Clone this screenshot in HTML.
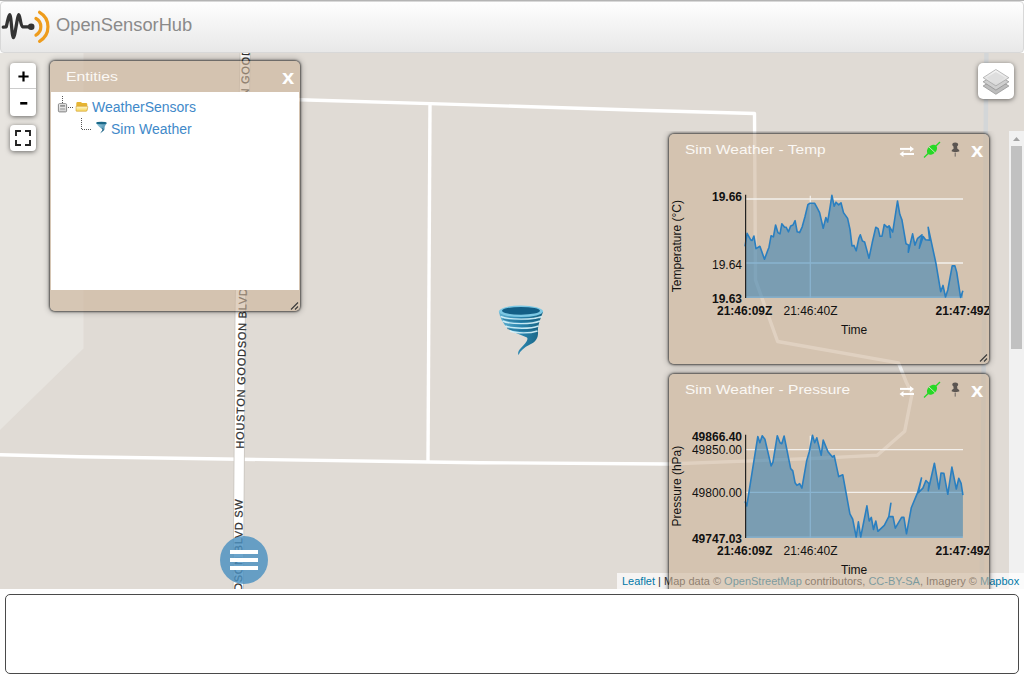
<!DOCTYPE html>
<html><head><meta charset="utf-8">
<style>
*{box-sizing:border-box}
html,body{margin:0;padding:0;width:1024px;height:675px;overflow:hidden;background:#fff;font-family:"Liberation Sans",sans-serif}
#topline{position:absolute;left:0;top:0;width:1024px;height:1px;background:#b4b4b4}
#header{position:absolute;left:0;top:1px;width:1024px;height:52px;border:1px solid #d8d8d8;border-radius:4px;background:linear-gradient(#fefefe,#e8e8e8)}
#brand{position:absolute;left:55px;top:12px;font-size:18.3px;color:#8a8a8a}
#map{position:absolute;left:0;top:53px;width:1024px;height:536px;overflow:hidden}
#bottom{position:absolute;left:5px;top:594px;width:1014px;height:80px;border:1.5px solid #4a4a4a;border-radius:5px;background:#fff}
.lctl{position:absolute;background:#fff;border-radius:4px;box-shadow:0 1px 5px rgba(0,0,0,.55)}
.win{position:absolute;background:rgba(204,178,152,.6);border-radius:5px;box-shadow:0 0 2px 1px rgba(0,0,0,.55),0 0 6px 1px rgba(0,0,0,.3)}
.wtitle{position:absolute;color:#fbf8f4;font-size:13.6px;white-space:nowrap;transform:scaleX(1.14);transform-origin:0 0}
.yl{position:absolute;right:282px;font-size:12px;color:#111;white-space:nowrap;line-height:14px}
.xl{position:absolute;font-size:12px;color:#111;white-space:nowrap;line-height:14px}
.yt{position:absolute;font-size:12px;color:#111;white-space:nowrap;line-height:14px;transform-origin:0 0;transform:translate(-50%,0) rotate(-90deg)}
#attr{position:absolute;left:617px;top:520px;width:407px;height:16px;background:rgba(255,255,255,.7);font-size:11px;line-height:16px;padding-left:5px;color:#333;white-space:nowrap}
#attr a{color:#0078a8;text-decoration:none}
#scroll{position:absolute;left:660px;top:78px;width:364px;height:560px;overflow:hidden}
</style></head><body>
<div id="topline"></div>
<div id="header">
 <svg style="position:absolute;left:-1px;top:-2px" width="60" height="52" viewBox="0 0 60 52">
  <path d="M3.3 27.2 L6.2 26.8 C7.6 22 8.4 14.6 9.7 14.6 C11.2 14.6 11.9 37.6 13.4 37.6 C15 37.6 17.4 14.6 18.8 14.6 C20 14.6 20.6 26.6 22.6 26.8 L31 26.8" fill="none" stroke="#333" stroke-width="3.3" stroke-linejoin="round" stroke-linecap="round"/>
  <circle cx="31.2" cy="26.8" r="3.3" fill="#333"/>
  <path d="M35.95 18.5 A9.5 9.5 0 0 1 35.95 35.1" fill="none" stroke="#ee9c1c" stroke-width="3.2" stroke-linecap="round"/>
  <path d="M39.55 12.3 A16.7 16.7 0 0 1 39.55 41.3" fill="none" stroke="#ee9c1c" stroke-width="3.2" stroke-linecap="round"/>
 </svg>
 <div id="brand">OpenSensorHub</div>
</div>
<div id="map">
<svg style="position:absolute;left:0;top:0" width="1024" height="536" viewBox="0 53 1024 536">
<rect x="0" y="53" width="1024" height="536" fill="#e0dbd5"/>
<polygon points="0,53 83.5,53 83.5,348.5 0,430" fill="#e7e4df"/>
<polyline points="250,98.2 300,99.7 455,104.4 640,110.2 754.5,113.5 755.5,280 777.6,341.5 898.5,362.8 906.2,382 912,394 904.7,431.2 877.3,455.2 850,456.6 825,458 668,464 480,462.7 428,462 80,456.8 0,454.7" fill="none" stroke="#fff" stroke-width="3.4" stroke-linejoin="round"/>
<polyline points="430,103.8 428,462" fill="none" stroke="#fff" stroke-width="3.4" stroke-linejoin="round"/>
<line x1="986.4" y1="53" x2="981.8" y2="589" stroke="#d3d6d8" stroke-width="4.5"/>
<polyline points="245.2,53 240.2,311 238.3,589" fill="none" stroke="#cbc7c1" stroke-width="11.2"/>
<polyline points="245.2,53 240.2,311 238.3,589" fill="none" stroke="#fff" stroke-width="9.4"/>
<text x="0" y="0" style="font-family:'Liberation Sans',sans-serif;font-size:11px;letter-spacing:0.75px;fill:#303030;stroke:#303030;stroke-width:0.25px" transform="translate(243.7,448.8) rotate(-88.9)">HOUSTON GOODSON BLVD SW</text>
<text x="0" y="0" style="font-family:'Liberation Sans',sans-serif;font-size:11px;letter-spacing:0.75px;fill:#303030;stroke:#303030;stroke-width:0.25px" transform="translate(248.8,96.5) rotate(-88.9)">N GOODSON</text>
<text x="0" y="0" style="font-family:'Liberation Sans',sans-serif;font-size:11px;letter-spacing:0.75px;fill:#303030;stroke:#303030;stroke-width:0.25px" transform="translate(241.4,682.8) rotate(-89.6)">HOUSTON GOODSON BLVD SW</text>
</svg>
<svg style="position:absolute;left:497px;top:251px" width="48" height="54" viewBox="497 304 48 54"><defs><linearGradient id="tg" x1="0" y1="0" x2="1" y2="0"><stop offset="0" stop-color="#5fb0d0"/><stop offset=".5" stop-color="#2a84ad"/><stop offset="1" stop-color="#16607f"/></linearGradient></defs><path d="M499 312 C500 318 503 324 508 328.5 C513 332.5 521 335 527 337.5 C529 340 524 345 520.5 348.5 C518 351 517.6 353.5 518.6 355 C520 351 524 347.5 530 344.5 C536 341.5 538.5 338 538 331 C537.8 326 539.5 321 543 312 Z" fill="url(#tg)"/><ellipse cx="521" cy="311.3" rx="22" ry="5.8" fill="#7cc8e4"/><ellipse cx="521" cy="310.8" rx="19" ry="3.9" fill="#135f86"/><path d="M500.5 316.5 C508 320 534 320 542 316.5 M502.5 321 C510 324.5 532 324.5 540 321 M505.5 326 C513 329 531 329 538.5 326 M510 331 C517 333.5 530 333.5 537.5 331" stroke="#d8f4fc" stroke-width="1.4" fill="none" opacity=".9"/><path d="M503 319 C510 322 530 322 539 318.5 M507 328.5 C514 331 530 331 537 328" stroke="#13577a" stroke-width="0.9" fill="none" opacity=".6"/></svg>
<div style="position:absolute;left:220px;top:483px;width:48px;height:48px;border-radius:50%;background:rgba(74,144,192,.82)"></div>
<div style="position:absolute;left:230px;top:497.2px;width:28px;height:3.5px;background:#fff"></div>
<div style="position:absolute;left:230px;top:505.3px;width:28px;height:3.5px;background:#fff"></div>
<div style="position:absolute;left:230px;top:513.2px;width:28px;height:3.5px;background:#fff"></div>
<div class="lctl" style="left:10px;top:10px;width:26px;height:53px"></div>
<div style="position:absolute;left:10px;top:34.8px;width:26px;height:1px;background:#ccc"></div>
<svg style="position:absolute;left:10px;top:10px" width="26" height="53" viewBox="0 0 26 53">
 <path d="M8.4 13.5 H18.6 M13.5 8.4 V18.6" stroke="#000" stroke-width="2.2"/>
 <path d="M10.2 40.3 H17.3" stroke="#000" stroke-width="2.6"/>
</svg>
<div class="lctl" style="left:10px;top:72px;width:26px;height:26px"></div>
<svg style="position:absolute;left:10px;top:72px" width="26" height="26" viewBox="0 0 26 26">
 <path d="M6 11 V6 H11 M15 6 H20 V11 M20 15 V20 H15 M11 20 H6 V15" stroke="#222" stroke-width="1.9" fill="none"/>
</svg>
<div class="lctl" style="left:978px;top:9.5px;width:36px;height:36px;border-radius:5px"></div>
<svg style="position:absolute;left:978px;top:9.5px" width="36" height="36" viewBox="978 62.5 36 36">
 <defs><linearGradient id="lg" x1="0" y1="0" x2="0" y2="1"><stop offset="0" stop-color="#f6f6f6"/><stop offset="1" stop-color="#d6d6d6"/></linearGradient></defs>
 <path d="M995.9 77.3 L1008.9 85.5 L995.9 93.8 L983.1 85.5 Z" fill="#bdbdbd" stroke="#8c8c8c" stroke-width=".7"/>
 <path d="M995.9 73.1 L1008.9 81.3 L995.9 89.6 L983.1 81.3 Z" fill="#cfcfcf" stroke="#8c8c8c" stroke-width=".7"/>
 <path d="M995.9 69 L1008.9 77.2 L995.9 85.4 L983.1 77.2 Z" fill="url(#lg)" stroke="#a0a0a0" stroke-width=".7"/>
 <path d="M995.9 71.5 L1005 77.2 L995.9 82.8 L986.8 77.2 Z" fill="#dedede"/>
</svg>


<div class="win" style="left:50px;top:8px;width:250px;height:250px"></div>
<div class="wtitle" style="left:65.8px;top:15.6px;transform:scaleX(1.165)">Entities</div>
<div style="position:absolute;left:281.8px;top:14.2px;font-size:19.5px;font-weight:bold;color:#fff;line-height:20px;transform:scaleX(1.13);transform-origin:0 0">x</div>
<div style="position:absolute;left:51px;top:39px;width:248px;height:198px;background:#fff"></div>
<svg style="position:absolute;left:50px;top:39px" width="70" height="50" viewBox="0 0 70 50">
 <defs><linearGradient id="fg" x1="0" y1="0" x2="0" y2="1"><stop offset="0" stop-color="#fffad0"/><stop offset="1" stop-color="#f4d050"/></linearGradient>
 <linearGradient id="bg" x1="0" y1="0" x2="0" y2="1"><stop offset="0" stop-color="#f4f4f4"/><stop offset="1" stop-color="#d0d0d0"/></linearGradient></defs>
 <path d="M12.5 4 V11" stroke="#555" stroke-width="1" stroke-dasharray="1 1" fill="none"/>
 <path d="M18 15.5 H23" stroke="#555" stroke-width="1" stroke-dasharray="1 1" fill="none"/>
 <path d="M31.5 26 V37.5 H41" stroke="#555" stroke-width="1" stroke-dasharray="1 1" fill="none"/>
 <rect x="8.4" y="11.7" width="8.2" height="8.2" rx="1" fill="url(#bg)" stroke="#888" stroke-width="1"/>
 <rect x="10.1" y="13.1" width="5" height="1.6" fill="#8a8a8a"/><rect x="10.1" y="16.2" width="5" height="1.6" fill="#b0b0b0"/>
 <path d="M26.3 11.5 q0 -1.4 1.3 -1.4 h3 q1 0 1.3 1 h4.2 q1.2 0 1.2 1.2 v5.8 q0 1 -1 1 h-9 q-1 0 -1 -1 z" fill="#e6b432"/>
 <path d="M26 14.3 h11.2 q0.8 0 .6 .8 l-.9 3.6 q-.2 .6 -.8 .6 h-9.4 q-.6 0 -.7 -.6 z" fill="url(#fg)" stroke="#c89020" stroke-width=".5"/>
</svg>
<svg style="position:absolute;left:95px;top:68px" width="13" height="13" viewBox="0 0 46 52">
 <defs><linearGradient id="sg" x1="0" y1="0" x2="1" y2="1"><stop offset="0" stop-color="#a8d8e8"/><stop offset=".6" stop-color="#5a9ab8"/><stop offset="1" stop-color="#1d5f80"/></linearGradient></defs>
 <path d="M1 8 C1 4 44 4 44 8 C44 12 38 16 36 22 C34 30 38 34 30 40 C26 43 22 45 20 50 C18 46 22 42 26 38 C30 34 24 32 20 28 C14 24 4 14 1 8 Z" fill="url(#sg)"/>
 <ellipse cx="22.5" cy="8" rx="21" ry="5" fill="#1a6888"/>
 <path d="M26 30 C32 34 30 38 24 42" stroke="#1d5a7a" stroke-width="4" fill="none"/>
</svg>
<div style="position:absolute;left:92px;top:45.5px;font-size:14px;color:#3f89c9;white-space:nowrap">WeatherSensors</div>
<div style="position:absolute;left:111px;top:67.8px;font-size:14px;color:#3f89c9;white-space:nowrap">Sim Weather</div>
<svg style="position:absolute;left:290px;top:248px" width="10" height="10" viewBox="0 0 10 10"><path d="M1 8.5 L8 1.5 M5 8.5 L8 5.5" stroke="#3a3a3a" stroke-width="1.1"/></svg>

<div id="scroll">
 <div style="position:absolute;left:349px;top:0;width:15px;height:560px;background:#f1f1f1"></div>
 <svg style="position:absolute;left:349px;top:0" width="15" height="20" viewBox="0 0 15 20"><path d="M4 10 L7.5 6 L11 10 Z" fill="#a3a3a3"/></svg>
 <div style="position:absolute;left:351px;top:15px;width:11px;height:203px;background:#c1c1c1"></div>
</div>
<div id="attr"><a>Leaflet</a> | Map data &copy; <a style="color:#0078a8">OpenStreetMap</a> contributors, <a>CC-BY-SA</a>, Imagery &copy; <a>Mapbox</a></div>
</div>
<div id="charts" style="position:absolute;left:0;top:0;width:1024px;height:589px;overflow:hidden">
<div style="position:absolute;left:660px;top:131px;width:364px;height:458px;overflow:hidden">
<div style="position:absolute;left:-660px;top:-131px;width:1024px;height:700px">
<div class="win" style="left:669px;top:134px;width:320px;height:230px"></div>
<div class="wtitle" style="left:685px;top:141.7px">Sim Weather - Temp</div>
<svg style="position:absolute;left:895px;top:139px" width="95" height="24" viewBox="895 139 95 24"><path d="M900 148.9 H911" stroke="#fff" stroke-width="2"/><path d="M914 148.9 L910 145.9 V151.9 Z" fill="#fff"/><path d="M903 154 H914" stroke="#fff" stroke-width="2"/><path d="M899.5 154 L903.5 151 V157 Z" fill="#fff"/><path d="M924 157.5 L940 142" stroke="#26d926" stroke-width="1.3"/><ellipse cx="932" cy="149.8" rx="5.8" ry="4.2" transform="rotate(-44 932 149.8)" fill="#26d926"/><path d="M928.8 146.8 L935.2 152.8" stroke="#d8e8c8" stroke-width="0.9"/><ellipse cx="955.2" cy="144.6" rx="2.9" ry="2" fill="#5c5652"/><path d="M953.4 145.5 h3.6 l0.4 3.2 c1.4 0.6 2 1.6 2 2.6 c-1 1 -6.8 1 -7.8 0 c0 -1 0.6 -2 2 -2.6 z" fill="#5c5652"/><path d="M955.2 152.5 V156.6" stroke="#6a6460" stroke-width="1"/></svg><div style="position:absolute;left:970.6px;top:139.8px;font-size:19.5px;font-weight:bold;color:#fff;line-height:20px;transform:scaleX(1.13);transform-origin:0 0">x</div>
<svg class="chart" style="position:absolute;left:660px;top:129px" width="340" height="240" viewBox="660 129 340 240"><line x1="745" y1="199.0" x2="963" y2="199.0" stroke="#f3f0ec" stroke-width="1.3"/><line x1="745" y1="263.0" x2="963" y2="263.0" stroke="#f3f0ec" stroke-width="1.3"/><line x1="745" y1="297.2" x2="963" y2="297.2" stroke="#f3f0ec" stroke-width="1.3"/><line x1="810.3" y1="195.7" x2="810.3" y2="298.0" stroke="#f3f0ec" stroke-width="1.2"/><polygon points="745.0,246.3 747.1,233.4 750.7,239.8 752.1,240.5 753.9,236.0 756.0,248.6 759.9,246.3 764.5,259.3 767.6,250.8 769.0,247.2 771.1,235.7 773.4,236.9 775.6,225.0 777.9,232.6 780.0,233.9 781.8,223.8 784.4,227.1 786.2,227.3 788.5,231.8 790.7,225.9 793.0,225.0 795.1,220.6 797.2,231.8 799.6,232.6 802.2,226.8 804.9,217.0 807.9,204.6 809.7,203.3 814.7,203.3 817.3,208.1 819.6,212.6 823.2,228.2 825.9,217.5 827.6,222.0 829.8,209.0 831.9,195.3 834.2,206.3 836.0,202.2 838.7,204.9 841.0,202.8 843.5,212.6 847.6,218.4 850.0,229.4 852.0,246.0 853.9,245.4 856.2,250.8 858.8,238.3 860.3,234.8 862.4,241.0 864.6,241.9 869.0,258.2 872.2,242.8 875.8,227.3 878.1,228.6 879.9,236.2 882.0,236.2 884.3,224.5 887.3,227.3 889.1,225.9 890.5,237.4 889.1,225.9 892.7,232.1 897.5,201.0 899.8,214.3 901.9,219.7 906.0,243.7 908.7,245.1 908.3,252.2 912.6,233.9 914.9,245.1 917.6,238.3 922.0,234.8 919.3,248.1 923.2,236.6 925.6,239.8 929.6,240.1 928.2,227.3 935.9,263.2 940.7,291.7 943.0,285.4 945.5,297.0 947.8,289.9 952.2,265.9 954.9,265.9 956.7,272.1 960.6,297.4 962.9,290.8 962.9,298.0 745,298.0" fill="rgba(31,119,180,0.5)"/><polyline points="745.0,246.3 747.1,233.4 750.7,239.8 752.1,240.5 753.9,236.0 756.0,248.6 759.9,246.3 764.5,259.3 767.6,250.8 769.0,247.2 771.1,235.7 773.4,236.9 775.6,225.0 777.9,232.6 780.0,233.9 781.8,223.8 784.4,227.1 786.2,227.3 788.5,231.8 790.7,225.9 793.0,225.0 795.1,220.6 797.2,231.8 799.6,232.6 802.2,226.8 804.9,217.0 807.9,204.6 809.7,203.3 814.7,203.3 817.3,208.1 819.6,212.6 823.2,228.2 825.9,217.5 827.6,222.0 829.8,209.0 831.9,195.3 834.2,206.3 836.0,202.2 838.7,204.9 841.0,202.8 843.5,212.6 847.6,218.4 850.0,229.4 852.0,246.0 853.9,245.4 856.2,250.8 858.8,238.3 860.3,234.8 862.4,241.0 864.6,241.9 869.0,258.2 872.2,242.8 875.8,227.3 878.1,228.6 879.9,236.2 882.0,236.2 884.3,224.5 887.3,227.3 889.1,225.9 890.5,237.4 889.1,225.9 892.7,232.1 897.5,201.0 899.8,214.3 901.9,219.7 906.0,243.7 908.7,245.1 908.3,252.2 912.6,233.9 914.9,245.1 917.6,238.3 922.0,234.8 919.3,248.1 923.2,236.6 925.6,239.8 929.6,240.1 928.2,227.3 935.9,263.2 940.7,291.7 943.0,285.4 945.5,297.0 947.8,289.9 952.2,265.9 954.9,265.9 956.7,272.1 960.6,297.4 962.9,290.8" fill="none" stroke="#2a7fc0" stroke-width="1.6" stroke-linejoin="round"/><line x1="745.6" y1="194.7" x2="745.6" y2="298.0" stroke="#222" stroke-width="1.2"/></svg>
<div class="yl" style="top:189.5px;font-weight:bold">19.66</div>
<div class="yl" style="top:258.0px;">19.64</div>
<div class="yl" style="top:292.3px;font-weight:bold">19.63</div>
<div class="xl" style="left:717px;top:303.5px;font-weight:bold">21:46:09Z</div>
<div class="xl" style="left:783.5px;top:303.5px">21:46:40Z</div>
<div style="position:absolute;left:900px;top:303.5px;width:89px;height:16px;overflow:hidden"><div class="xl" style="left:35.5px;top:0;font-weight:bold">21:47:49Z</div></div>
<div class="xl" style="left:841px;top:323.3px">Time</div>
<svg style="position:absolute;left:660px;top:129px" width="40" height="240" viewBox="660 129 40 240"><text transform="translate(681,246.1) rotate(-90)" text-anchor="middle" style="font-family:'Liberation Sans',sans-serif;font-size:12px;fill:#111">Temperature (°C)</text></svg>
<svg style="position:absolute;left:978.5px;top:353px" width="10" height="10" viewBox="0 0 10 10"><path d="M1 8.5 L8 1.5 M5 8.5 L8 5.5" stroke="#3a3a3a" stroke-width="1.1"/></svg>
<div class="win" style="left:669px;top:374px;width:320px;height:230px"></div>
<div class="wtitle" style="left:685px;top:381.7px">Sim Weather - Pressure</div>
<svg style="position:absolute;left:895px;top:379px" width="95" height="24" viewBox="895 139 95 24"><path d="M900 148.9 H911" stroke="#fff" stroke-width="2"/><path d="M914 148.9 L910 145.9 V151.9 Z" fill="#fff"/><path d="M903 154 H914" stroke="#fff" stroke-width="2"/><path d="M899.5 154 L903.5 151 V157 Z" fill="#fff"/><path d="M924 157.5 L940 142" stroke="#26d926" stroke-width="1.3"/><ellipse cx="932" cy="149.8" rx="5.8" ry="4.2" transform="rotate(-44 932 149.8)" fill="#26d926"/><path d="M928.8 146.8 L935.2 152.8" stroke="#d8e8c8" stroke-width="0.9"/><ellipse cx="955.2" cy="144.6" rx="2.9" ry="2" fill="#5c5652"/><path d="M953.4 145.5 h3.6 l0.4 3.2 c1.4 0.6 2 1.6 2 2.6 c-1 1 -6.8 1 -7.8 0 c0 -1 0.6 -2 2 -2.6 z" fill="#5c5652"/><path d="M955.2 152.5 V156.6" stroke="#6a6460" stroke-width="1"/></svg><div style="position:absolute;left:970.6px;top:379.8px;font-size:19.5px;font-weight:bold;color:#fff;line-height:20px;transform:scaleX(1.13);transform-origin:0 0">x</div>
<svg class="chart" style="position:absolute;left:660px;top:369px" width="340" height="240" viewBox="660 369 340 240"><line x1="745" y1="449.6" x2="963" y2="449.6" stroke="#f3f0ec" stroke-width="1.3"/><line x1="745" y1="492.3" x2="963" y2="492.3" stroke="#f3f0ec" stroke-width="1.3"/><line x1="745" y1="537.2" x2="963" y2="537.2" stroke="#f3f0ec" stroke-width="1.3"/><line x1="810.3" y1="435.7" x2="810.3" y2="538.0" stroke="#f3f0ec" stroke-width="1.2"/><polygon points="745.0,501.4 746.8,505.9 752.4,470.3 757.8,436.6 759.9,442.8 762.2,435.7 764.9,439.2 771.1,465.9 772.9,462.3 777.3,435.7 780.0,442.8 781.8,443.7 784.1,436.0 790.7,468.6 792.8,470.9 795.1,482.8 796.9,485.4 799.6,483.7 801.9,488.1 806.7,460.6 809.3,451.7 812.5,435.3 814.7,442.8 816.8,437.8 821.2,455.2 823.2,440.1 828.0,451.7 832.4,457.0 834.2,455.6 838.7,476.6 842.8,474.8 849.9,513.9 852.7,519.2 856.2,537.0 858.4,521.9 860.7,537.0 866.9,505.9 869.2,521.0 871.3,517.4 873.5,529.5 875.8,521.0 877.9,531.3 884.3,525.4 888.8,516.6 890.9,503.2 888.8,516.6 893.0,516.6 895.3,528.1 901.6,517.4 903.9,517.4 906.5,533.8 911.3,507.7 917.6,492.6 921.5,478.0 918.4,492.6 922.9,488.1 925.9,480.5 929.1,483.7 928.2,490.8 934.4,463.2 938.9,489.0 941.0,473.0 943.9,473.4 947.8,494.3 951.9,467.1 956.3,489.0 958.8,478.3 961.1,483.3 962.9,495.2 962.9,538.0 745,538.0" fill="rgba(31,119,180,0.5)"/><polyline points="745.0,501.4 746.8,505.9 752.4,470.3 757.8,436.6 759.9,442.8 762.2,435.7 764.9,439.2 771.1,465.9 772.9,462.3 777.3,435.7 780.0,442.8 781.8,443.7 784.1,436.0 790.7,468.6 792.8,470.9 795.1,482.8 796.9,485.4 799.6,483.7 801.9,488.1 806.7,460.6 809.3,451.7 812.5,435.3 814.7,442.8 816.8,437.8 821.2,455.2 823.2,440.1 828.0,451.7 832.4,457.0 834.2,455.6 838.7,476.6 842.8,474.8 849.9,513.9 852.7,519.2 856.2,537.0 858.4,521.9 860.7,537.0 866.9,505.9 869.2,521.0 871.3,517.4 873.5,529.5 875.8,521.0 877.9,531.3 884.3,525.4 888.8,516.6 890.9,503.2 888.8,516.6 893.0,516.6 895.3,528.1 901.6,517.4 903.9,517.4 906.5,533.8 911.3,507.7 917.6,492.6 921.5,478.0 918.4,492.6 922.9,488.1 925.9,480.5 929.1,483.7 928.2,490.8 934.4,463.2 938.9,489.0 941.0,473.0 943.9,473.4 947.8,494.3 951.9,467.1 956.3,489.0 958.8,478.3 961.1,483.3 962.9,495.2" fill="none" stroke="#2a7fc0" stroke-width="1.6" stroke-linejoin="round"/><line x1="745.6" y1="434.7" x2="745.6" y2="538.0" stroke="#222" stroke-width="1.2"/></svg>
<div class="yl" style="top:429.5px;font-weight:bold">49866.40</div>
<div class="yl" style="top:443.0px;">49850.00</div>
<div class="yl" style="top:486.0px;">49800.00</div>
<div class="yl" style="top:532.3px;font-weight:bold">49747.03</div>
<div class="xl" style="left:717px;top:543.5px;font-weight:bold">21:46:09Z</div>
<div class="xl" style="left:783.5px;top:543.5px">21:46:40Z</div>
<div style="position:absolute;left:900px;top:543.5px;width:89px;height:16px;overflow:hidden"><div class="xl" style="left:35.5px;top:0;font-weight:bold">21:47:49Z</div></div>
<div class="xl" style="left:841px;top:563.3px">Time</div>
<svg style="position:absolute;left:660px;top:369px" width="40" height="240" viewBox="660 369 40 240"><text transform="translate(681,486.1) rotate(-90)" text-anchor="middle" style="font-family:'Liberation Sans',sans-serif;font-size:12px;fill:#111">Pressure (hPa)</text></svg>
</div></div></div>
<div id="bottom"></div>
</body></html>
